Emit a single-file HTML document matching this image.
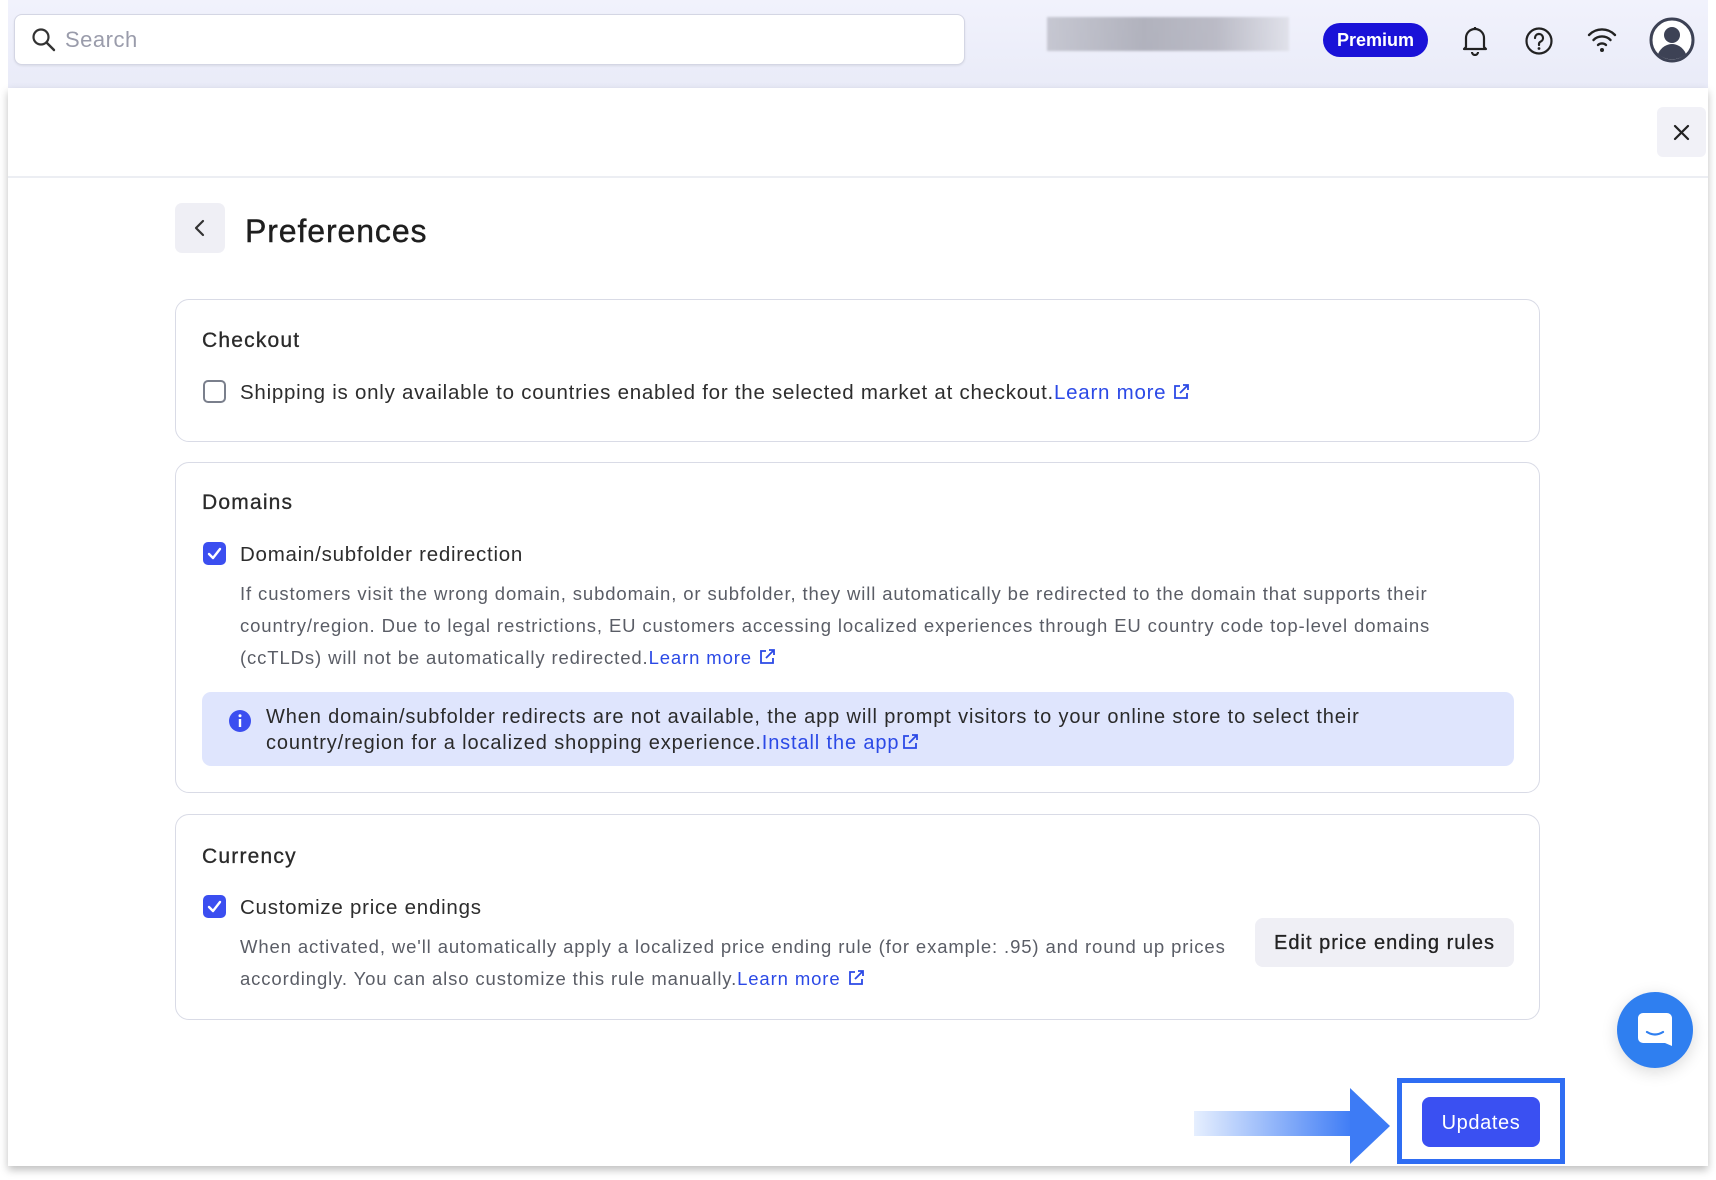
<!DOCTYPE html>
<html><head><meta charset="utf-8"><style>
*{margin:0;padding:0;box-sizing:border-box}
body{width:1716px;height:1180px;background:#fff;font-family:"Liberation Sans",sans-serif;position:relative;overflow:hidden;color:#222}
.abs{position:absolute}
.top{left:8px;top:0;width:1700px;height:88px;background:linear-gradient(#f1f2fc,#e9ebf8)}
.search{left:14px;top:14px;width:951px;height:51px;background:#fff;border:1px solid #d4d6e4;border-radius:8px;box-shadow:0 1px 2px rgba(0,0,0,.08)}
.panel{left:8px;top:88px;width:1700px;height:1078px;background:#fff;box-shadow:0 4px 8px rgba(0,0,0,.25)}
.card{left:175px;width:1365px;border:1.5px solid #d9dbe6;border-radius:14px;background:#fff}
.h{font-size:21px;color:#2a2a2a;letter-spacing:1.2px;-webkit-text-stroke:.3px #2a2a2a}
.cb{width:23px;height:23px;border-radius:5px}
.cb.off{border:2px solid #7a7f8c}
.cb.on{background:#3b4ef0}
.lbl{font-size:20.5px;color:#2d2d2d;letter-spacing:.75px}
.desc{font-size:18.5px;color:#5a5d66;line-height:32px;white-space:nowrap;letter-spacing:.88px}
.link{color:#2b49e6}
.ext{display:inline-block;vertical-align:-2px;margin-left:6px}
</style></head><body>
<div class="abs top"></div>
<div class="abs search"></div>
<svg class="abs" style="left:31px;top:27px" width="26" height="26" viewBox="0 0 26 26"><circle cx="10" cy="10" r="7.5" fill="none" stroke="#333" stroke-width="2.2"/><path d="M15.5 15.5L23 23" stroke="#333" stroke-width="2.4" stroke-linecap="round"/></svg>
<div class="abs" style="left:65px;top:27px;font-size:22px;color:#9a9cab;letter-spacing:.5px">Search</div>
<div class="abs" style="left:1047px;top:17px;width:242px;height:34px;background:linear-gradient(90deg,#b9bac4,#9d9ea9 40%,#aaaab5 70%,#dcdde5);opacity:.75;filter:blur(1px)"></div>
<div class="abs" style="left:1323px;top:23px;width:105px;height:34px;border-radius:17px;background:#1a12d8;color:#fff;font-size:18px;font-weight:bold;text-align:center;line-height:34px">Premium</div>
<svg class="abs" style="left:1461px;top:24px" width="28" height="32" viewBox="0 0 28 32"><path d="M5 23V14a9 9 0 0 1 18 0v9l2 2H3z" fill="none" stroke="#222" stroke-width="2.2" stroke-linejoin="round"/><path d="M11 28a3 3 0 0 0 6 0" fill="none" stroke="#222" stroke-width="2.2"/><path d="M14 3v2" stroke="#222" stroke-width="2.2"/></svg>
<svg class="abs" style="left:1524px;top:26px" width="30" height="30" viewBox="0 0 30 30"><circle cx="15" cy="15" r="12.5" fill="none" stroke="#222" stroke-width="2.2"/><path d="M11 12a4 4 0 1 1 5.5 3.7c-1 .5-1.5 1.2-1.5 2.3v1" fill="none" stroke="#222" stroke-width="2.2" stroke-linecap="round"/><circle cx="15" cy="22.5" r="1.4" fill="#222"/></svg>
<svg class="abs" style="left:1586px;top:26px" width="32" height="28" viewBox="0 0 32 28"><path d="M3 9a18 18 0 0 1 26 0M7.5 14a12 12 0 0 1 17 0M12 19a6 6 0 0 1 8 0" fill="none" stroke="#222" stroke-width="2.4" stroke-linecap="round"/><circle cx="16" cy="24" r="2" fill="#222"/></svg>
<svg class="abs" style="left:1649px;top:17px" width="46" height="46" viewBox="0 0 46 46"><circle cx="23" cy="23" r="21" fill="#fff" stroke="#3d4255" stroke-width="3"/><circle cx="23" cy="18" r="8" fill="#3d4255"/><path d="M9 37c3-7 9-10 14-10s11 3 14 10a21 21 0 0 1-28 0z" fill="#3d4255"/></svg>

<div class="abs panel"></div>
<div class="abs" style="left:8px;top:176px;width:1700px;height:2px;background:#eceef3"></div>
<div class="abs" style="left:1657px;top:107px;width:49px;height:50px;background:#f1f1f7;border-radius:6px"></div>
<svg class="abs" style="left:1673px;top:124px" width="17" height="17" viewBox="0 0 17 17"><path d="M2 2l13 13M15 2L2 15" stroke="#222" stroke-width="2.2" stroke-linecap="round"/></svg>

<div class="abs" style="left:175px;top:203px;width:50px;height:50px;background:#efeff5;border-radius:7px"></div>
<svg class="abs" style="left:193px;top:219px" width="14" height="18" viewBox="0 0 14 18"><path d="M10 2L3 9l7 7" fill="none" stroke="#333" stroke-width="2.2" stroke-linecap="round" stroke-linejoin="round"/></svg>
<div class="abs" style="left:245px;top:211px;font-size:32px;color:#1e1e1e;line-height:40px;letter-spacing:.9px;-webkit-text-stroke:.4px #1e1e1e">Preferences</div>

<div class="abs card" style="top:299px;height:143px"></div>
<div class="abs h" style="left:202px;top:329px">Checkout</div>
<div class="abs cb off" style="left:203px;top:380px"></div>
<div class="abs lbl" style="left:240px;top:381px">Shipping is only available to countries enabled for the selected market at checkout.<span class="link">Learn more</span><svg class="ext" width="18" height="18" viewBox="0 0 18 18"><path d="M8 3H3v12h12v-5M11 2h5v5M16 2l-8 8" fill="none" stroke="#2b49e6" stroke-width="1.8"/></svg></div>

<div class="abs card" style="top:462px;height:331px"></div>
<div class="abs h" style="left:202px;top:491px">Domains</div>
<div class="abs cb on" style="left:203px;top:542px"></div>
<svg class="abs" style="left:207px;top:547px" width="15" height="13" viewBox="0 0 15 13"><path d="M2 7l4 4 7-9" fill="none" stroke="#fff" stroke-width="2.4" stroke-linecap="round" stroke-linejoin="round"/></svg>
<div class="abs lbl" style="left:240px;top:543px">Domain/subfolder redirection</div>
<div class="abs desc" style="left:240px;top:578px">If customers visit the wrong domain, subdomain, or subfolder, they will automatically be redirected to the domain that supports their<br>country/region. Due to legal restrictions, EU customers accessing localized experiences through EU country code top-level domains<br>(ccTLDs) will not be automatically redirected.<span class="link">Learn more</span><svg class="ext" width="18" height="18" viewBox="0 0 18 18"><path d="M8 3H3v12h12v-5M11 2h5v5M16 2l-8 8" fill="none" stroke="#2b49e6" stroke-width="1.8"/></svg></div>
<div class="abs" style="left:202px;top:692px;width:1312px;height:74px;background:#dfe5fd;border-radius:9px"></div>
<svg class="abs" style="left:228px;top:709px" width="24" height="24" viewBox="0 0 24 24"><circle cx="12" cy="12" r="11" fill="#3b4ef0"/><rect x="10.8" y="10" width="2.4" height="8" fill="#fff"/><circle cx="12" cy="6.8" r="1.5" fill="#fff"/></svg>
<div class="abs" style="left:266px;top:704px;font-size:20px;color:#2a2a2a;line-height:26px;white-space:nowrap;letter-spacing:.87px">When domain/subfolder redirects are not available, the app will prompt visitors to your online store to select their<br>country/region for a localized shopping experience.<span class="link">Install the app</span><svg style="display:inline-block;vertical-align:-2px;margin-left:2px" width="18" height="18" viewBox="0 0 18 18"><path d="M8 3H3v12h12v-5M11 2h5v5M16 2l-8 8" fill="none" stroke="#2b49e6" stroke-width="1.8"/></svg></div>

<div class="abs card" style="top:814px;height:206px"></div>
<div class="abs h" style="left:202px;top:845px">Currency</div>
<div class="abs cb on" style="left:203px;top:895px"></div>
<svg class="abs" style="left:207px;top:900px" width="15" height="13" viewBox="0 0 15 13"><path d="M2 7l4 4 7-9" fill="none" stroke="#fff" stroke-width="2.4" stroke-linecap="round" stroke-linejoin="round"/></svg>
<div class="abs lbl" style="left:240px;top:896px">Customize price endings</div>
<div class="abs desc" style="left:240px;top:931px">When activated, we'll automatically apply a localized price ending rule (for example: .95) and round up prices<br>accordingly. You can also customize this rule manually.<span class="link">Learn more</span><svg class="ext" width="18" height="18" viewBox="0 0 18 18"><path d="M8 3H3v12h12v-5M11 2h5v5M16 2l-8 8" fill="none" stroke="#2b49e6" stroke-width="1.8"/></svg></div>
<div class="abs" style="left:1255px;top:918px;width:259px;height:49px;background:#efeff5;border-radius:8px;font-size:20px;color:#222;text-align:center;line-height:51px;letter-spacing:1px;-webkit-text-stroke:.3px #222">Edit price ending rules</div>

<div class="abs" style="left:1617px;top:992px;width:76px;height:76px;border-radius:50%;background:#2f7ff0;box-shadow:0 4px 16px rgba(0,0,0,.15)"></div>
<svg class="abs" style="left:1635px;top:1010px" width="40" height="40" viewBox="0 0 40 40"><path d="M8 3h24a5 5 0 0 1 5 5v28l-7-3H8a5 5 0 0 1-5-5V8a5 5 0 0 1 5-5z" fill="#fff"/><path d="M12 22q8 5 16 0" fill="none" stroke="#2f7ff0" stroke-width="2.2" stroke-linecap="round"/></svg>

<div class="abs" style="left:1194px;top:1111px;width:160px;height:25px;background:linear-gradient(90deg,#e6effe,#3d7bf5)"></div>
<svg class="abs" style="left:1350px;top:1088px" width="42" height="76" viewBox="0 0 42 76"><path d="M0 0L40 38L0 76z" fill="#3d7bf5"/></svg>
<div class="abs" style="left:1397px;top:1078px;width:168px;height:86px;border:5px solid #2f6df3"></div>
<div class="abs" style="left:1422px;top:1097px;width:118px;height:50px;background:#3a50f2;border-radius:8px;color:#fff;font-size:20px;text-align:center;line-height:52px;letter-spacing:.6px">Updates</div>
</body></html>
